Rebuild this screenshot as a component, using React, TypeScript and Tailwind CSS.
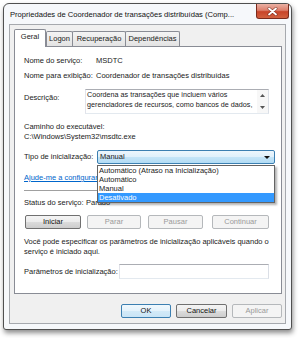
import React from "react";

function PanelBtn({ label, w, disabled }: { label: string; w: string; disabled?: boolean }) {
  return (
    <div
      className={
        disabled
          ? `${w} h-[14px] flex items-center justify-center rounded-[2px] border border-[#b5b8bb] bg-[#f4f4f4] text-[#9a9a9a]`
          : `${w} h-[14px] flex items-center justify-center rounded-[2px] border border-[#707070] bg-[linear-gradient(#f4f4f4_0%,#ebebeb_50%,#dcdcdc_50%,#cdcdcd_100%)] text-[#111]`
      }
    >
      {label}
    </div>
  );
}

export default function App() {
  return (
    <div className="w-[300px] h-[338px] bg-white pl-[3px] pt-[3px] font-['Liberation_Sans',Arial,sans-serif] text-[7.5px] leading-[10px] text-[#1a1a1a]">
      <div className="w-[289px] h-[327px] flex flex-col border border-[#505050] rounded-t-[6px] rounded-b-[3px] bg-[#f6f8fb] shadow-[1px_3px_5px_rgba(0,0,0,0.45)]">
        {/* Title bar */}
        <div className="h-[20px] flex items-start shrink-0">
          <div className="pl-[6px] pt-[6px] whitespace-nowrap text-[7.6px] leading-[10px] text-[#111]">
            Propriedades de Coordenador de transações distribuídas (Comp...
          </div>
          <div className="ml-auto mr-[2px] w-[33px] h-[15px] rounded-b-[3px] border border-[#7a2a1c] border-t-0 bg-[linear-gradient(#eab0a3_0%,#dd7f6c_45%,#c84429_55%,#d2603f_100%)] flex items-center justify-center">
            <svg width="11" height="9" viewBox="0 0 11 9">
              <path d="M2 1.5 L9 7.5 M9 1.5 L2 7.5" stroke="#5a1a10" strokeWidth="3" strokeLinecap="round" opacity="0.6" />
              <path d="M2 1.5 L9 7.5 M9 1.5 L2 7.5" stroke="#ffffff" strokeWidth="1.8" strokeLinecap="round" />
            </svg>
          </div>
        </div>

        {/* Client area */}
        <div className="mx-[5px] mb-[5px] flex-1 flex flex-col border border-[#a6a9ae] bg-[#f0f0f0] pt-[4px] pl-[4px] pr-[3px]">
          {/* Tabs */}
          <div className="h-[17px] flex items-end shrink-0">
            <div className="relative z-10 w-[32px] h-[18px] -mb-[1px] border border-b-0 border-[#898c95] bg-white text-center pt-[2px] rounded-t-[2px]">
              Geral
            </div>
            <div className="w-[27px] h-[15px] border border-b-0 border-[#898c95] bg-[linear-gradient(#f4f4f4,#e3e3e3)] text-center pt-[2px] rounded-t-[2px]">
              Logon
            </div>
            <div className="-ml-[1px] w-[54px] h-[15px] border border-b-0 border-[#898c95] bg-[linear-gradient(#f4f4f4,#e3e3e3)] text-center pt-[2px] rounded-t-[2px]">
              Recuperação
            </div>
            <div className="-ml-[1px] w-[55px] h-[15px] border border-b-0 border-[#898c95] bg-[linear-gradient(#f4f4f4,#e3e3e3)] text-center pt-[2px] rounded-t-[2px]">
              Dependências
            </div>
          </div>

          {/* Panel */}
          <div className="w-[268px] h-[248px] shrink-0 border border-[#898c95] bg-white pl-[9px] pt-[9px] flex flex-col">
            <div className="h-[10px] flex">
              <div className="w-[72px]">Nome do serviço:</div>
              <div>MSDTC</div>
            </div>
            <div className="mt-[5px] h-[10px] flex">
              <div className="w-[72px] whitespace-nowrap">Nome para exibição:</div>
              <div className="whitespace-nowrap">Coordenador de transações distribuídas</div>
            </div>
            <div className="mt-[8px] h-[25px] flex">
              <div className="w-[61px] pt-[4px]">Descrição:</div>
              <div className="w-[184px] h-[25px] border border-[#abadb3] border-r-[#dbdfe6] border-b-[#e3e9ef] border-l-[#e2e3ea] flex">
                <div className="flex-1 pl-[1px] text-[7.2px] leading-[10px] whitespace-nowrap overflow-hidden">
                  <div>Coordena as transações que incluem vários</div>
                  <div>gerenciadores de recursos, como bancos de dados,</div>
                </div>
                <div className="w-[11px] flex flex-col bg-[#f7f7f7]">
                  <div className="h-[11px] flex items-center justify-center">
                    <svg width="5" height="3" viewBox="0 0 5 3"><path d="M0 3 L2.5 0 L5 3 Z" fill="#555" /></svg>
                  </div>
                  <div className="flex-1" />
                  <div className="h-[11px] flex items-center justify-center">
                    <svg width="5" height="3" viewBox="0 0 5 3"><path d="M0 0 L2.5 3 L5 0 Z" fill="#555" /></svg>
                  </div>
                </div>
              </div>
            </div>
            <div className="mt-[8px] h-[10px]">Caminho do executável:</div>
            <div className="h-[10px]">{"C:\\Windows\\System32\\msdtc.exe"}</div>

            <div className="mt-[8px] h-[14px] flex">
              <div className="w-[73px] flex items-center">Tipo de inicialização:</div>
              <div className="relative w-[178px] h-[14px]">
                <div className="w-full h-full rounded-[2px] border border-[#3c7fb1] bg-[linear-gradient(#edf6fc_0%,#dff0fb_50%,#c6e5f7_50%,#b2dcf4_100%)] flex items-center pl-[2px] pr-[4px]">
                  <span className="flex-1">Manual</span>
                  <svg width="6" height="3" viewBox="0 0 6 3"><path d="M0 0 L6 0 L3 3 Z" fill="#111" /></svg>
                </div>
                <div className="absolute z-20 left-0 top-[15px] w-[178px] border border-[#646464] bg-white shadow-[2px_2px_2px_rgba(0,0,0,0.3)] leading-[9px]">
                  <div className="h-[9px] pl-[1px] whitespace-nowrap">Automático (Atraso na Inicialização)</div>
                  <div className="h-[9px] pl-[1px]">Automático</div>
                  <div className="h-[9px] pl-[1px]">Manual</div>
                  <div className="h-[9px] pl-[1px] bg-[#3399ff] text-white">Desativado</div>
                </div>
              </div>
            </div>

            <div className="mt-[9px] h-[10px] whitespace-nowrap text-[#0066cc] underline">
              Ajude-me a configurar as opções de recuperação.
            </div>
            <div className="mt-[7px] h-[1px] w-[245px] bg-[#a0a0a0]" />
            <div className="mt-[7px] h-[10px] flex">
              <div className="w-[62px]">Status do serviço:</div>
              <div>Parado</div>
            </div>
            <div className="mt-[7px] h-[14px] flex pl-[1px]">
              <PanelBtn label="Iniciar" w="w-[56px]" />
              <div className="w-[6px]" />
              <PanelBtn label="Parar" w="w-[54px]" disabled />
              <div className="w-[7px]" />
              <PanelBtn label="Pausar" w="w-[55px]" disabled />
              <div className="w-[9px]" />
              <PanelBtn label="Continuar" w="w-[57px]" disabled />
            </div>
            <div className="mt-[8px] leading-[9.5px]">
              <div className="whitespace-nowrap">Você pode especificar os parâmetros de inicialização aplicáveis quando o</div>
              <div>serviço é iniciado aqui.</div>
            </div>
            <div className="mt-[8px] h-[15px] flex">
              <div className="w-[95px] flex items-center whitespace-nowrap">Parâmetros de inicialização:</div>
              <div className="w-[150px] h-[15px] border border-[#abadb3] border-r-[#dbdfe6] border-b-[#e3e9ef] border-l-[#e2e3ea] bg-white" />
            </div>
          </div>

          {/* Dialog buttons */}
          <div className="mt-[10px] h-[14px] flex justify-end">
            <div className="w-[50px] h-[14px] flex items-center justify-center rounded-[2px] border border-[#3c7fb1] bg-[linear-gradient(#f0f8fd_0%,#e4f2fb_50%,#d3eaf8_50%,#c9e4f6_100%)] text-[#111]">
              OK
            </div>
            <div className="ml-[5px] w-[51px] h-[14px] flex items-center justify-center rounded-[2px] border border-[#707070] bg-[linear-gradient(#f4f4f4_0%,#ebebeb_50%,#dcdcdc_50%,#cdcdcd_100%)] text-[#111]">
              Cancelar
            </div>
            <div className="ml-[5px] w-[50px] h-[14px] flex items-center justify-center rounded-[2px] border border-[#b5b8bb] bg-[#f4f4f4] text-[#9a9a9a]">
              Aplicar
            </div>
          </div>
        </div>
      </div>
    </div>
  );
}
